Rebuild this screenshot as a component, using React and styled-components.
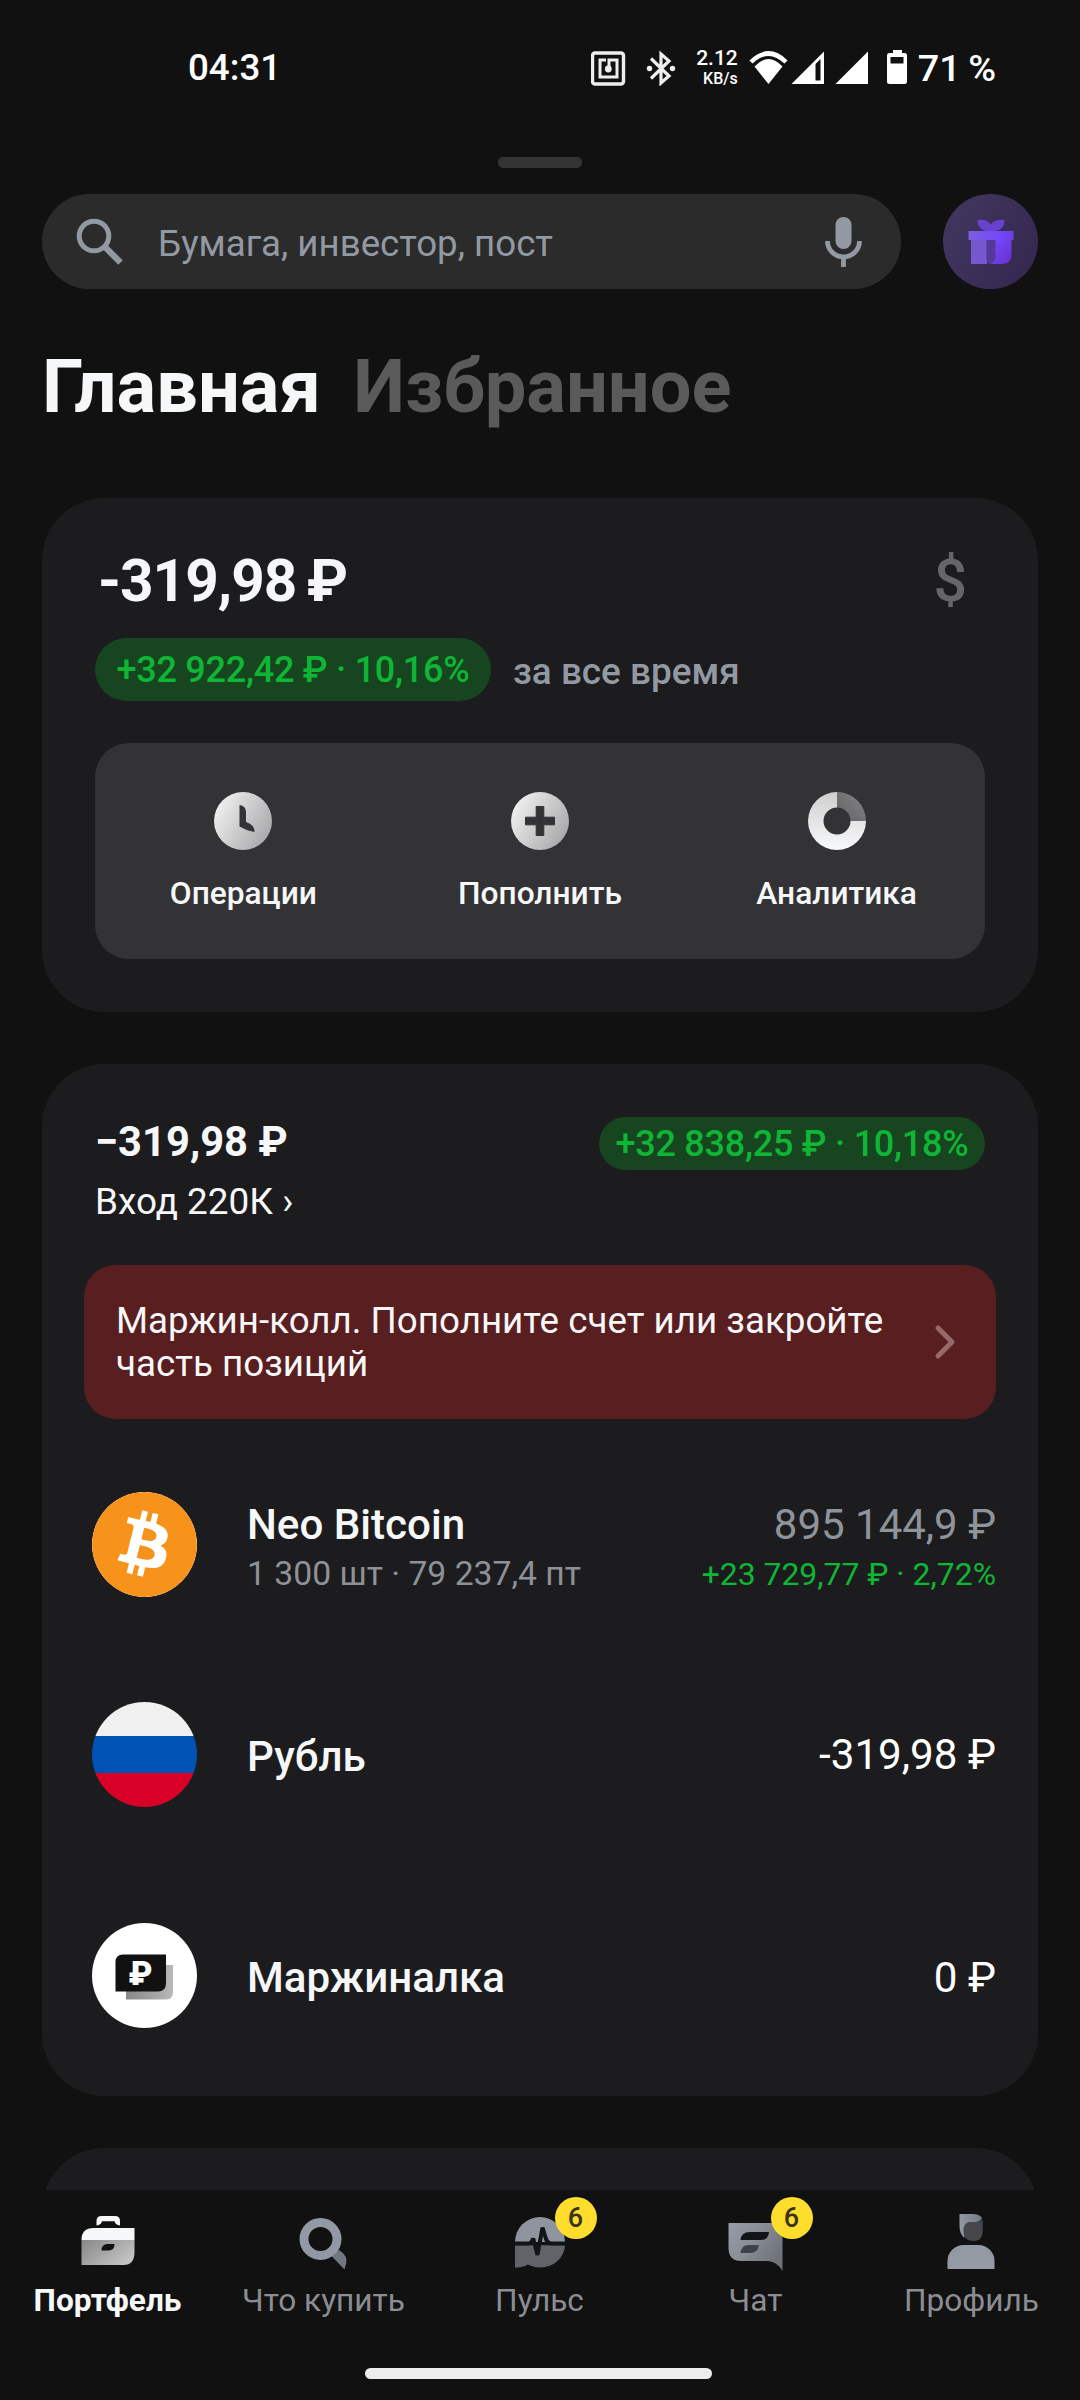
import React from "react";
import styled, { createGlobalStyle } from "styled-components";
import { SiBitcoin } from "react-icons/si";

const GlobalStyle = createGlobalStyle`
  * { box-sizing: border-box; }
  body { margin: 0; background: #111111; }
`;

const c = {
  card: "#1c1c1e",
  text: "#f6f7f8",
  muted: "#9299a2",
  green: "#0fb635",
  greenBg: "#164520",
};

const Screen = styled.div`
  width: 1080px;
  height: 2400px;
  display: flex;
  flex-direction: column;
  overflow: hidden;
  background: #111111;
  color: ${c.text};
  font-family: Roboto, "Noto Sans", sans-serif;
  white-space: nowrap;
`;
const Main = styled.main`
  height: 2190px;
  flex: none;
  overflow: hidden;
`;
const Text = styled.span`
  display: block;
  font-size: ${(p) => p.$size}px;
  font-weight: ${(p) => p.$weight || 400};
  line-height: ${(p) => p.$line || 48}px;
  color: ${(p) => p.$color || "inherit"};
  letter-spacing: ${(p) => p.$track || 0}px;
  word-spacing: ${(p) => p.$word || 0}px;
`;
const Row = styled.div`
  display: flex;
  align-items: ${(p) => p.$align || "center"};
  justify-content: ${(p) => p.$justify || "flex-start"};
`;

/* Status bar */
const StatusBar = styled.header`
  display: flex;
  align-items: center;
  justify-content: space-between;
  height: 136px;
  padding: 0 84px 0 188px;
  color: #fff;
`;
const StatusIcons = styled.div`
  display: flex;
  align-items: center;
`;
const Speed = styled.div`
  width: 41px;
  margin: 0 10px 0 21px;
  padding-top: 2px;
  display: flex;
  flex-direction: column;
  align-items: flex-end;
`;
const Battery = styled(Text)`
  margin-left: 8px;
`;
const Handle = styled.div`
  width: 84px;
  height: 11px;
  margin: 21px auto 26px;
  border-radius: 5px;
  background: #343434;
`;

/* Search */
const TopRow = styled.div`
  display: flex;
  justify-content: space-between;
  padding: 0 42px;
`;
const SearchField = styled.div`
  display: flex;
  align-items: center;
  width: 859px;
  height: 95px;
  padding: 0 38px 0 32px;
  border-radius: 48px;
  background: #2b2b2b;
`;
const Placeholder = styled(Text)`
  flex: 1;
  padding: 4px 0 0 32px;
`;
const GiftButton = styled.div`
  display: flex;
  align-items: center;
  justify-content: center;
  width: 95px;
  height: 95px;
  border-radius: 50%;
  background: linear-gradient(120deg, #42385f, #34264f);
`;
const Tabs = styled.nav`
  display: flex;
  gap: 32.5px;
  margin: 50px 0 63px;
  padding: 0 42px;
`;

/* Cards */
const Card = styled.section`
  height: ${(p) => p.$height}px;
  margin: 0 42px 52px;
  padding: ${(p) => p.$top}px 53px 0;
  border-radius: 62px;
  background: ${c.card};
`;
const TotalRow = styled(Row)`
  padding: 0 18px 0 3px;
`;
const Pill = styled.div`
  display: flex;
  align-items: center;
  justify-content: center;
  width: ${(p) => p.$width}px;
  height: ${(p) => p.$height}px;
  border-radius: 32px;
  background: ${c.greenBg};
`;
const PeriodRow = styled(Row)`
  gap: 22px;
  margin: 20px 0 42px;
`;
const Period = styled(Text)`
  padding-top: 4px;
`;
const Actions = styled.div`
  display: grid;
  grid-template-columns: repeat(3, 1fr);
  height: 216px;
  border-radius: 34px;
  background: #333335;
`;
const Action = styled.div`
  display: flex;
  flex-direction: column;
  align-items: center;
  padding-top: 49px;
  gap: 20px;
`;
const Banner = styled.div`
  display: flex;
  align-items: center;
  justify-content: space-between;
  height: 154px;
  margin: 28px -11px 20px;
  padding: 0 38px 0 32px;
  border-radius: 32px;
  background: #591e20;
`;
const Asset = styled.div`
  display: flex;
  align-items: center;
  height: ${(p) => p.$height}px;
  margin: 0 -11px 0 -3px;
`;
const AssetIcon = styled.div`
  display: flex;
  width: 105px;
  height: 105px;
  flex: none;
  border-radius: 50%;
  overflow: hidden;
  background: ${(p) => p.$fill || "#fff"};
`;
const BitcoinIcon = styled(SiBitcoin)`
  border-radius: 50%;
  background: #fff;
`;
const Stripes = styled.div`
  width: 100%;
  background: linear-gradient(#f0f0f0 0 34px, #0052b4 34px 71px, #d80027 71px);
`;
const AssetBody = styled.div`
  flex: 1;
  display: flex;
  justify-content: space-between;
  padding: ${(p) => p.$shift || 0}px 0 0 50px;
`;
const Right = styled.div`
  text-align: right;
  margin-top: ${(p) => p.$lift || 0}px;
`;

/* Bottom navigation */
const BottomNav = styled.nav`
  display: grid;
  grid-template-columns: repeat(5, 216px);
  flex: none;
  height: 178px;
  padding-top: 22px;
  margin-left: -0.5px;
`;
const NavItem = styled.div`
  display: flex;
  flex-direction: column;
  align-items: center;
  gap: 8px;
`;
const IconBox = styled.div`
  position: relative;
  width: 60px;
  height: 60px;
`;
const Badge = styled.div`
  position: absolute;
  left: 45px;
  top: -15px;
  width: 42px;
  height: 42px;
  border-radius: 50%;
  background: #ffdd2d;
  text-align: center;
`;
const HomeBar = styled.div`
  flex: none;
  width: 347px;
  height: 11px;
  margin-left: 365px;
  border-radius: 6px;
  background: #ededed;
`;
const Svg = styled.svg`
  display: block;
  flex: none;
`;

const StatusGlyph = ({ x, w, children }) => (
  <Svg width={w} height="36" viewBox={`${x} 50 ${w} 36`} fill="none">{children}</Svg>
);

const Connectivity = () => (
  <StatusGlyph x={591} w={85}>
    <rect x="592.5" y="53" width="31" height="31" rx="2.5" stroke="#eee" strokeWidth="3.4" />
    <path d="M606 60H600V77H617V60H609V69" stroke="#eee" strokeWidth="3" />
    <circle cx="608.3" cy="69" r="3.4" fill="#eee" />
    <path d="M651 58.500L669 76L661 83V54L669 61L651 78.500" stroke="#eee" strokeWidth="3.2" />
    <circle cx="649.500" cy="68.500" r="2.700" fill="#eee" />
    <circle cx="672.500" cy="68.500" r="2.700" fill="#eee" />
  </StatusGlyph>
);

const Signals = () => (
  <StatusGlyph x={748} w={162}>
    <path d="M751 62Q768.500 45 786 62" stroke="#fff" strokeWidth="4.500" />
    <path d="M754.500 66.500Q768.500 51.500 782.500 66.500L768.500 84Z" fill="#fff" />
    <path fillRule="evenodd" d="M791.500 84L824 51.500V84ZM815.500 64V80.500H820.500V59Z" fill="#fff" />
    <path d="M835.500 84L868 51.500V84Z" fill="#fff" />
    <path fillRule="evenodd" d="M893 50H902V53H904.500Q907 53 907 55.500V81.500Q907 84 904.500 84H889.500Q887 84 887 81.500V55.500Q887 53 889.500 53H893ZM890.500 57V63.500H903.500V57Z" fill="#fff" />
  </StatusGlyph>
);

const SearchIcon = () => (
  <Svg width="52" height="52" viewBox="74 216 52 52" fill="none" stroke={c.muted}>
    <circle cx="94" cy="236" r="14.800" strokeWidth="5" />
    <path d="M104.500 246.500L120.500 262.500" strokeWidth="6.200" />
  </Svg>
);
const MicIcon = () => (
  <Svg width="38" height="52" viewBox="825 215 38 52" fill="none">
    <rect x="835.500" y="216" width="16" height="32" rx="8" fill={c.muted} />
    <path d="M827.500 240A16 16 0 0 0 859.500 240M843.500 256V266" stroke={c.muted} strokeWidth="4.800" />
  </Svg>
);
const GiftIcon = () => (
  <Svg width="48" height="48" viewBox="966.500 217.500 48 48">
    <defs>
      <linearGradient id="lid" x1="0" x2="1"><stop stopColor="#7c5fe0" /><stop offset="0.700" stopColor="#7546fa" /><stop offset="1" stopColor="#6c3fe0" /></linearGradient>
      <linearGradient id="flap" x1="0" y1="0" x2="1" y2="1"><stop stopColor="#7a4cff" /><stop offset="1" stopColor="#6430cf" /></linearGradient>
    </defs>
    <path d="M977 219.500Q987 218.500 990.500 224Q994 218.500 1004 219.500Q1004 231 990.500 231Q977 231 977 219.500Z" fill="#6742cd" />
    <rect x="970.500" y="239" width="16" height="24.500" fill="#7757cf" />
    <path d="M986 239H996V263.500H990Q986 263 986 258Z" fill="#54399b" />
    <path d="M995 239H1011V254Q1011 263.500 1001 263.500H990Q995 262 995 256Z" fill="url(#flap)" />
    <rect x="968" y="230.500" width="45" height="9" fill="url(#lid)" />
  </Svg>
);

const Disc = ({ id, children }) => (
  <Svg width="58" height="58" viewBox="0 0 58 58">
    <defs>
      <linearGradient id={id} x1="0" y1="0.200" x2="1" y2="0.800"><stop stopColor="#f3f3f4" /><stop offset="1" stopColor="#a5a5a7" /></linearGradient>
    </defs>
    <circle cx="29" cy="29" r="29" fill={`url(#${id})`} />
    {children}
  </Svg>
);
const OperationsIcon = () => (
  <Disc id="clock"><path d="M25.500 13Q32 14 32 20V30Q41 33 40.500 40Q34 39 25.500 34.500Z" fill="#333335" /></Disc>
);
const TopUpIcon = () => (
  <Disc id="plus"><path d="M25.200 14.500H32.800V25.200H43.500V32.800H32.800V43.500H25.200V32.800H14.500V25.200H25.200Z" fill="#333335" stroke="#333335" strokeLinejoin="round" /></Disc>
);
const AnalyticsIcon = () => (
  <Svg width="58" height="58" viewBox="0 0 58 58">
    <defs>
      <linearGradient id="ring" x1="0" y1="0" x2="0" y2="1"><stop stopColor="#cfcfd0" /><stop offset="1" stopColor="#f8f9fa" /></linearGradient>
      <linearGradient id="slice" x1="1" y1="0" x2="0" y2="1"><stop stopColor="#88888a" /><stop offset="1" stopColor="#606062" /></linearGradient>
    </defs>
    <path d="M29 0A29 29 0 1 0 58 29H42.500A13.500 13.500 0 1 1 29 15.500Z" fill="url(#ring)" />
    <path d="M29 0A29 29 0 0 1 58 29H42.500A13.500 13.500 0 0 0 29 15.500Z" fill="url(#slice)" />
  </Svg>
);
const Chevron = () => (
  <Svg width="24" height="36" viewBox="0 0 24 36" fill="none">
    <path d="M4 4L18 18L4 32" stroke="#966a6b" strokeWidth="5" strokeLinecap="round" strokeLinejoin="round" />
  </Svg>
);
const CashIcon = () => (
  <Svg width="105" height="105" viewBox="0 0 105 105">
    <defs>
      <linearGradient id="note"><stop stopColor="#888" /><stop offset="1" stopColor="#b8b8b8" /></linearGradient>
    </defs>
    <path d="M34 42H81V69Q81 76.500 74 76.500H34Z" fill="url(#note)" />
    <path d="M23.500 39Q23.500 31.500 31 31.500H74V60Q74 68.500 66 68.500H23.500Z" fill="#111" />
    <text x="48.500" y="61.500" textAnchor="middle" fontFamily="Roboto" fontWeight="900" fontSize="33" fill="#fff">₽</text>
  </Svg>
);

const PortfolioIcon = () => (
  <Svg width="60" height="60" viewBox="77.500 2212 60 60">
    <defs>
      <linearGradient id="case" x1="0" y1="0" x2="1" y2="0.600"><stop stopColor="#878787" /><stop offset="1" stopColor="#c2c2c2" /></linearGradient>
    </defs>
    <path d="M96 2225.500V2221Q96 2216 101 2216H114.500Q119.500 2216 119.500 2221V2225.500Q115 2225 114 2221.200H101.500Q100.500 2225 96 2225.500Z" fill="#f8f8f8" />
    <path d="M81 2240Q81 2228 93 2228H134V2240Z" fill="#f6f7f8" />
    <path d="M81 2240H134V2252Q134 2265 123 2265H81Z" fill="url(#case)" />
    <path d="M101 2250.500Q101 2244 107 2244H114Q114 2250.500 108 2250.500Z" fill="#111" />
  </Svg>
);
const BuyIcon = () => (
  <Svg width="60" height="60" viewBox="293.500 2212 60 60" fill="none">
    <path d="M331 2256L338.500 2250Q348 2256 345.500 2264L344 2269.500Z" fill="#727680" />
    <circle cx="320" cy="2239" r="16.500" stroke="#9398a5" strokeWidth="9" />
  </Svg>
);
const PulseIcon = () => (
  <Svg width="60" height="60" viewBox="509.500 2212 60 60">
    <path d="M514.500 2242A25 25 0 0 1 564.500 2242Z" fill="#8f959e" />
    <path d="M514.500 2245.300H564.500A25 23 0 0 1 540 2267.500Q533 2267.500 527.500 2264.500Q522 2268 514.500 2267.500Z" fill="#606468" />
    <path d="M514 2243.500H528Q531 2243.500 532.700 2238.500L537 2255L542 2227.500L545.500 2239Q547 2243.500 551 2243.500H565" fill="none" stroke="#111418" strokeWidth="4" strokeLinejoin="bevel" />
  </Svg>
);
const ChatIcon = () => (
  <Svg width="60" height="60" viewBox="725.500 2212 60 60">
    <defs>
      <linearGradient id="chat" x1="0" y1="0" x2="1" y2="0.600"><stop stopColor="#969ba5" /><stop offset="0.500" stopColor="#888d96" /><stop offset="1" stopColor="#6e7279" /></linearGradient>
    </defs>
    <path d="M728 2223H782V2271Q776 2261 767 2261H741Q728 2261 728 2248Z" fill="url(#chat)" />
    <path d="M740 2240Q741 2232 749 2232H768.500Q768 2240 760 2240Z" fill="#111418" />
    <path d="M740 2253Q741 2245 748 2245H758.500Q757 2253 750 2253Z" fill="#3f4246" />
  </Svg>
);
const ProfileIcon = () => (
  <Svg width="60" height="60" viewBox="942.500 2212 60 60">
    <defs>
      <linearGradient id="head"><stop stopColor="#9298a2" /><stop offset="1" stopColor="#747982" /></linearGradient>
    </defs>
    <path d="M960 2214H973Q980 2214 982.500 2218Q981 2222 976 2222H971Q965 2222.500 965 2230V2238Q960 2234 960 2226Z" fill="url(#head)" />
    <path d="M964 2230Q964 2222 972 2222H976Q981.500 2222 983.300 2219.500V2231Q983.300 2241 973.700 2241Q964 2241 964 2230Z" fill="#46474a" />
    <path d="M948 2269V2261A16 16 0 0 1 964 2245H979A16 16 0 0 1 995 2261V2269Z" fill="#949aa4" />
  </Svg>
);

const navItems = [
  { label: "Портфель", Icon: PortfolioIcon, active: true },
  { label: "Что купить", Icon: BuyIcon },
  { label: "Пульс", Icon: PulseIcon, badge: 6 },
  { label: "Чат", Icon: ChatIcon, badge: 6 },
  { label: "Профиль", Icon: ProfileIcon },
];
const actions = [
  ["Операции", OperationsIcon],
  ["Пополнить", TopUpIcon],
  ["Аналитика", AnalyticsIcon],
];

export default function App() {
  return (
    <Screen>
      <GlobalStyle />
      <Main>
        <StatusBar>
          <Text $size={36.7} $weight={500}>04:31</Text>
          <StatusIcons>
            <Connectivity />
            <Speed>
              <Text $size={21} $weight={500} $line={20}>2.12</Text>
              <Text $size={16} $weight={500} $line={22}>KB/s</Text>
            </Speed>
            <Signals />
            <Battery $size={37.8} $weight={500} $word={-2}>71 %</Battery>
          </StatusIcons>
        </StatusBar>
        <Handle />
        <TopRow>
          <SearchField>
            <SearchIcon />
            <Placeholder $size={36.7} $color={c.muted}>Бумага, инвестор, пост</Placeholder>
            <MicIcon />
          </SearchField>
          <GiftButton><GiftIcon /></GiftButton>
        </TopRow>
        <Tabs>
          <Text $size={74} $weight={700} $line={96}>Главная</Text>
          <Text $size={74} $weight={700} $line={96} $color="#5a5a5a">Избранное</Text>
        </Tabs>

        <Card $height={514} $top={46}>
          <TotalRow $justify="space-between">
            <Text $size={58.5} $weight={700} $line={74} $track={-1} $word={-3}>-319,98 ₽</Text>
            <Text $size={59} $weight={500} $line={74} $color="#666668">$</Text>
          </TotalRow>
          <PeriodRow>
            <Pill $width={396} $height={63}>
              <Text $size={36} $weight={500} $color={c.green} $track={-0.25}>+32 922,42 ₽ · 10,16%</Text>
            </Pill>
            <Period $size={36.9} $weight={500} $color={c.muted}>за все время</Period>
          </PeriodRow>
          <Actions>
            {actions.map(([label, Icon]) => (
              <Action key={label}>
                <Icon />
                <Text $size={31.7} $weight={500}>{label}</Text>
              </Action>
            ))}
          </Actions>
        </Card>

        <Card $height={1032} $top={53}>
          <Row $justify="space-between" $align="flex-start">
            <div>
              <Text $size={41.7} $weight={700} $line={49}>−319,98 ₽</Text>
              <Text $size={36.9} $line={71}>Вход 220К ›</Text>
            </div>
            <Pill $width={386} $height={53}>
              <Text $size={36} $weight={500} $color={c.green} $track={-0.25}>+32 838,25 ₽ · 10,18%</Text>
            </Pill>
          </Row>
          <Banner>
            <Text $size={36.75} $line={43}>Маржин-колл. Пополните счет или закройте<br />часть позиций</Text>
            <Chevron />
          </Banner>
          <Asset $height={210}>
            <AssetIcon $fill="#f7931a"><BitcoinIcon size={105} color="#f7931a" /></AssetIcon>
            <AssetBody $shift={9}>
              <div>
                <Text $size={42.1} $weight={500} $line={50}>Neo Bitcoin</Text>
                <Text $size={33.7} $color="#8e9197">1 300 шт · 79 237,4 пт</Text>
              </div>
              <Right>
                <Text $size={42} $line={50} $color="#8f939a">895 144,9 ₽</Text>
                <Text $size={31.9} $color={c.green}>+23 729,77 ₽ · 2,72%</Text>
              </Right>
            </AssetBody>
          </Asset>
          <Asset $height={211}>
            <AssetIcon><Stripes /></AssetIcon>
            <AssetBody $shift={5}>
              <Text $size={42.1} $weight={500}>Рубль</Text>
              <Right $lift={-2}><Text $size={42.2} $color="#fff">-319,98 ₽</Text></Right>
            </AssetBody>
          </Asset>
          <Asset $height={231}>
            <AssetIcon><CashIcon /></AssetIcon>
            <AssetBody $shift={4}>
              <Text $size={42.1} $weight={500}>Маржиналка</Text>
              <Right><Text $size={42.2} $color="#fff">0 ₽</Text></Right>
            </AssetBody>
          </Asset>
        </Card>
        <Card $height={300} $top={0} />
      </Main>

      <BottomNav>
        {navItems.map(({ label, Icon, badge, active }) => (
          <NavItem key={label}>
            <IconBox>
              <Icon />
              {badge && <Badge><Text $size={27} $weight={500} $line={42} $color="#3a3414">{badge}</Text></Badge>}
            </IconBox>
            <Text $size={31.6} $line={41} $weight={active ? 700 : 400} $color={active ? c.text : "#8b8d93"}>{label}</Text>
          </NavItem>
        ))}
      </BottomNav>
      <HomeBar />
    </Screen>
  );
}
